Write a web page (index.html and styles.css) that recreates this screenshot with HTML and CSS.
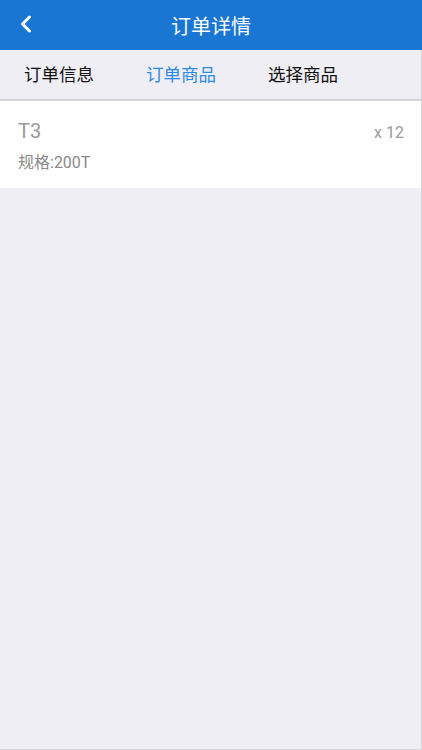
FILE: index.html
```html
<!doctype html>
<html lang="zh">
<head>
    <meta charset="UTF-8">
    <title>订单详情</title>
<link rel="stylesheet" href="styles.css">
</head>
<body>
<header class="topbar">
<span class="back">
<svg width="14" height="18" viewBox="0 0 14 18"><path d="M10.5 2 L3.5 9 L10.5 16" fill="none" stroke="#fff" stroke-width="3" stroke-linecap="round" stroke-linejoin="round"/></svg>
</span>
<h1>订单详情</h1>
</header>
<div class="page">
<nav class="tabs">
<a class="tab">订单信息</a>
<a class="tab active">订单商品</a>
<a class="tab">选择商品</a>
</nav>
<div class="item">
<div class="info">
<div class="name">T3</div>
<div class="spec">规格:200T</div>
</div>
<div class="qty">x 12</div>
</div>
</div>
</body>
</html>
```

FILE: styles.css
```css
body {
    margin: 0;
    background-color: #EFEEF4;
    font-family: Roboto, "Noto Sans CJK SC", sans-serif;
    height: 750px;
    overflow: hidden;
}
.topbar {
    height: 50px;
    background-color: #1976D2;
    display: flex;
    align-items: center;
    justify-content: center;
    position: relative;
}
.topbar h1 {
    margin: 0;
    color: white;
    font-size: 20px;
    font-weight: normal;
}
.back {
    position: absolute;
    left: 19px;
    top: 15px;
}
.page {
    height: 700px;
    border-right: 1px solid #d6d6da;
    border-bottom: 1px solid #d6d6da;
    box-sizing: border-box;
}
.tabs {
    height: 51px;
    display: flex;
    align-items: center;
    padding-left: 24px;
    padding-bottom: 2px;
    gap: 52px;
    border-bottom: 2px solid #d4d4d8;
    box-sizing: border-box;
}
.tab {
    font-size: 17.5px;
    color: #111;
}
.tab.active {
    color: #2B8AE6;
}
.item {
    background: white;
    display: flex;
    justify-content: space-between;
    padding: 18px 17px 18px 18px;
    height: 87px;
    box-sizing: border-box;
}
.name {
    font-size: 20px;
    color: #9a9a9a;
    line-height: 24px;
}
.spec {
    font-size: 16px;
    color: #8a8a8a;
    margin-top: 6px;
}
.qty {
    font-size: 16px;
    color: #9a9a9a;
    margin-top: 4px;
}
```
